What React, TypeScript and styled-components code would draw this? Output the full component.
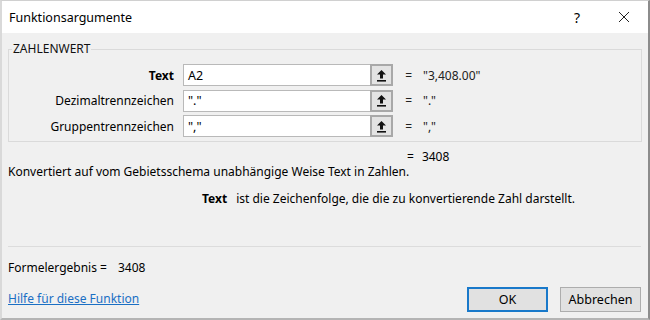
import React from "react";
import styled, { createGlobalStyle } from "styled-components";

const GlobalStyle = createGlobalStyle`
  html, body {
    margin: 0;
    padding: 0;
    background: #f0f0f0;
  }
  * {
    box-sizing: border-box;
  }
`;

const Window = styled.div`
  width: 650px;
  height: 320px;
  display: flex;
  flex-direction: column;
  background: #f0f0f0;
  border-left: 2px solid #d9d9d9;
  border-right: 2px solid #8c8c8c;
  border-top: 1px solid #d0d0d0;
  border-bottom: 2px solid #b4b4b4;
  font-family: "Noto Sans", "Open Sans", sans-serif;
  font-size: 12px;
  color: #000;
  overflow: hidden;
`;

const TitleBar = styled.div`
  height: 32px;
  flex: none;
  display: flex;
  align-items: center;
  background: #fff;
  padding-left: 7px;
`;

const Title = styled.div`
  flex: 1;
  font-size: 12.5px;
`;

const TitleButton = styled.div<{ $w: number }>`
  width: ${(p) => p.$w}px;
  height: 32px;
  display: flex;
  align-items: center;
  justify-content: center;
  font-size: 14px;
`;

const Body = styled.div`
  flex: 1;
  display: flex;
  flex-direction: column;
  padding: 0 6px 6px 6px;
`;

const Group = styled.fieldset`
  margin: 9px 0 0 0;
  padding: 8px 0 4px 0;
  border: 1px solid #dadada;
  width: 634px;
`;

const Legend = styled.legend`
  padding: 0 1px;
  margin-left: 3px;
  font-size: 12px;
  line-height: 14px;
  color: #111;
`;

const ArgGrid = styled.div`
  display: grid;
  grid-template-columns: 165px 196px 23px 19px 1fr;
  grid-auto-rows: 22px;
  row-gap: 3.5px;
  column-gap: 0;
`;

const ArgLabel = styled.div<{ $bold?: boolean }>`
  display: flex;
  align-items: center;
  justify-content: flex-end;
  font-weight: ${(p) => (p.$bold ? 700 : 400)};
`;

const ArgInput = styled.div`
  margin-left: 9px;
  display: flex;
  align-items: center;
  padding-left: 4px;
  background: #fff;
  border: 1px solid #b9b9b9;
  border-right: none;
  font-size: 12.5px;
`;

const PickButton = styled.div`
  display: flex;
  align-items: center;
  justify-content: center;
  background: #e3e3e3;
  border: 2px solid #a8a8a8;
`;

const Eq = styled.div`
  display: flex;
  align-items: center;
  justify-content: flex-end;
  color: #222;
`;

const Value = styled.div`
  display: flex;
  align-items: center;
  padding-left: 11px;
  color: #222;
`;

const ResultLine = styled.div`
  margin-top: 7px;
  padding-left: 399px;
  display: flex;
  gap: 8px;
  line-height: 16px;
`;

const Description = styled.div`
  margin-top: -1px;
  line-height: 16px;
`;

const ArgHelp = styled.div`
  margin-top: 11px;
  padding-left: 194px;
  display: flex;
  gap: 9px;
  line-height: 16px;
`;

const Strong = styled.span`
  font-weight: 700;
`;

const Separator = styled.div`
  margin-top: 39px;
  height: 1px;
  width: 633px;
  background: #dcdcdc;
`;

const Footer = styled.div`
  flex: 1;
  display: flex;
  align-items: flex-end;
  justify-content: space-between;
`;

const FooterLeft = styled.div`
  display: flex;
  flex-direction: column;
  gap: 15px;
  padding-bottom: 5px;
  line-height: 16px;
`;

const FormulaResult = styled.div`
  display: flex;
  gap: 11px;
`;

const HelpLink = styled.a`
  color: #1a6fc4;
  text-decoration: underline;
  cursor: pointer;
`;

const Buttons = styled.div`
  display: flex;
  gap: 12px;
  margin-right: 1px;
`;

const DialogButton = styled.button<{ $default?: boolean }>`
  width: 81px;
  height: 25px;
  font-family: inherit;
  font-size: 12.5px;
  background: #e1e1e1;
  border: ${(p) => (p.$default ? "2px solid #1979ca" : "1px solid #adadad")};
  padding: 0;
  color: #000;
`;

const UploadIcon = () => (
  <svg width="11" height="13" viewBox="0 0 11 13">
    <path d="M5.5 1 L10 5.5 L7 5.5 L7 9.5 L4 9.5 L4 5.5 L1 5.5 Z" fill="#111" />
    <rect x="1" y="11" width="9" height="1.6" fill="#111" />
  </svg>
);

const CloseIcon = () => (
  <svg width="12" height="12" viewBox="0 0 12 12">
    <path d="M1 1 L11 11 M11 1 L1 11" stroke="#222" strokeWidth="1" />
  </svg>
);

const args = [
  { label: "Text", bold: true, input: "A2", value: '"3,408.00"' },
  { label: "Dezimaltrennzeichen", input: '"."', value: '"."' },
  { label: "Gruppentrennzeichen", input: '","', value: '","' },
];

const App: React.FC = () => {
  return (
    <>
      <GlobalStyle />
      <Window>
        <TitleBar>
          <Title>Funktionsargumente</Title>
          <TitleButton $w={46}>?</TitleButton>
          <TitleButton $w={48}>
            <CloseIcon />
          </TitleButton>
        </TitleBar>
        <Body>
          <Group>
            <Legend>ZAHLENWERT</Legend>
            <ArgGrid>
              {args.map((a) => (
                <React.Fragment key={a.label}>
                  <ArgLabel $bold={a.bold}>{a.label}</ArgLabel>
                  <ArgInput>{a.input}</ArgInput>
                  <PickButton>
                    <UploadIcon />
                  </PickButton>
                  <Eq>=</Eq>
                  <Value>{a.value}</Value>
                </React.Fragment>
              ))}
            </ArgGrid>
          </Group>
          <ResultLine>
            <span>=</span>
            <span>3408</span>
          </ResultLine>
          <Description>
            Konvertiert auf vom Gebietsschema unabhängige Weise Text in Zahlen.
          </Description>
          <ArgHelp>
            <Strong>Text</Strong>
            <span>ist die Zeichenfolge, die die zu konvertierende Zahl darstellt.</span>
          </ArgHelp>
          <Separator />
          <Footer>
            <FooterLeft>
              <FormulaResult>
                <span>Formelergebnis =</span>
                <span>3408</span>
              </FormulaResult>
              <HelpLink>Hilfe für diese Funktion</HelpLink>
            </FooterLeft>
            <Buttons>
              <DialogButton $default>OK</DialogButton>
              <DialogButton>Abbrechen</DialogButton>
            </Buttons>
          </Footer>
        </Body>
      </Window>
    </>
  );
};

export default App;
